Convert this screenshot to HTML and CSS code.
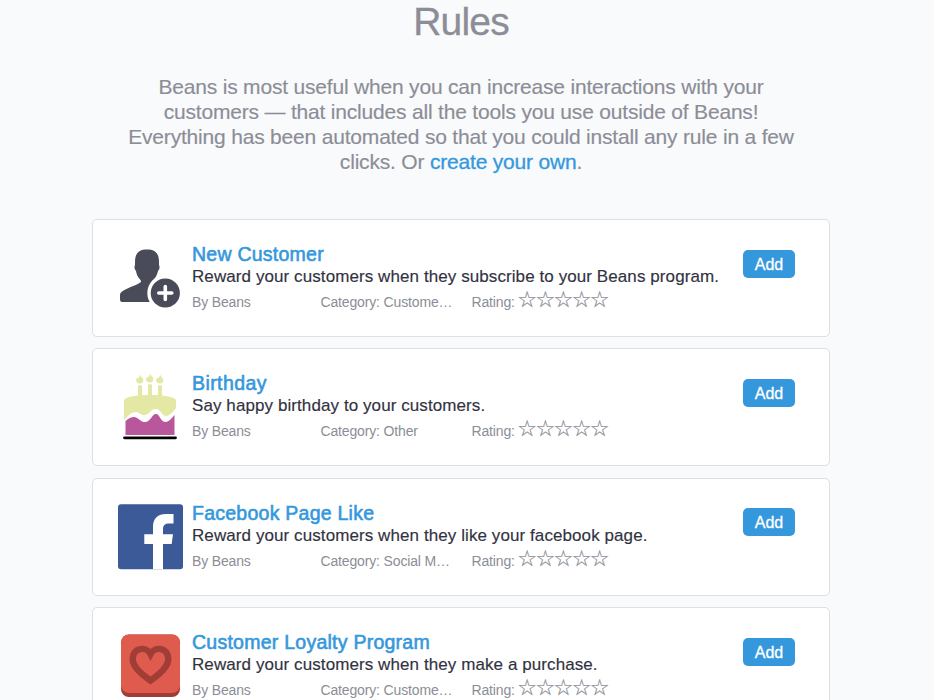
FILE: index.html
```html
<!DOCTYPE html>
<html lang="en">
<head>
<meta charset="utf-8">
<title>Rules</title>
<link rel="stylesheet" href="styles.css">
</head>
<body>
<main class="page">
  <h1 class="heading">Rules</h1>
  <p class="intro">Beans is most useful when you can increase interactions with your<br>customers — that includes all the tools you use outside of Beans!<br>Everything has been automated so that you could install any rule in a few<br>clicks. Or <a href="#">create your own</a>.</p>
  <section class="rules">
    <article class="card">
      <svg class="icon" viewBox="0 0 66 66" fill="#494b58">
        <path d="M17 17C17 8 21 4.500 29 4.500S41 8 41 17V20Q42.500 23 40 26C38 34 35 34 35 36.500Q35 39 43 43L44 57H4Q2 57 2 54V50C2 44 22 40 23 36.500C23 34 19 33 18 26Q15.500 23 17 20Z"/>
        <circle cx="47.300" cy="48" r="18" fill="#fff"/><circle cx="47.300" cy="48" r="14.600"/>
        <path d="M47.300 41.500V54.500M40.800 48H53.800" stroke="#fff" stroke-width="3.600" stroke-linecap="round"/>
      </svg>
      <div class="body">
        <h2 class="title">New Customer</h2>
        <p class="desc">Reward your customers when they subscribe to your Beans program.</p>
        <div class="meta"><span>By Beans</span><span>Category: Custome…</span><span class="rating">Rating: <span class="stars">☆☆☆☆☆</span></span></div>
      </div>
      <button class="add">Add</button>
    </article>
    <article class="card">
      <svg class="icon" viewBox="0 0 66 66">
        <path fill="#e3e9a4" d="M6 26Q8 22.500 20 21.500V12Q22 10 24 12V21H30V11Q32 9 34 11V21H40V12Q42 10 44 12V21.500Q56 22.500 58 26V34Q52 42 48 42Q45 42 42 37Q37 32 32 38C28 42 25 42 21 39Q16 36 11 41L6 46ZM22 0.500Q22.800 2.500 25 4.500Q26 9.500 22 9.500Q17 9.500 18.500 4.500Q22 4 22 .5ZM32 -.5Q32.800 1.500 35 3.500Q36 8.500 32 8.500Q27 8.500 28.500 3.500Q32 3 32 -.5ZM42 0.500Q42.800 2.500 45 4.500Q46 9.500 42 9.500Q37 9.500 38.500 4.500Q42 4 42 .5Z"/>
        <path fill="#b9579d" d="M7.500 47Q12 43 16 43C20 43 23 49 28 48C33 47 34 40 38 40C42 40 42 48 48 48Q51 48 56.500 41V61H7.500Z"/>
        <path stroke="#000" stroke-width="2.800" stroke-linecap="round" d="M6.500 63.800H57.500"/>
      </svg>
      <div class="body">
        <h2 class="title short">Birthday</h2>
        <p class="desc">Say happy birthday to your customers.</p>
        <div class="meta"><span>By Beans</span><span>Category: Other</span><span class="rating">Rating: <span class="stars">☆☆☆☆☆</span></span></div>
      </div>
      <button class="add">Add</button>
    </article>
    <article class="card">
      <svg class="icon" viewBox="0 0 66 66">
        <rect y="0.300" width="65" height="65" rx="3" fill="#3c5998"/>
        <path fill="#fff" d="M35 65.300V40H26.300V30.300H35V23C35 14 40 10 48 10H55.500V19.500H50.500Q45 19.500 45 25V30.300H55L53.700 40H45V65.300Z"/>
      </svg>
      <div class="body">
        <h2 class="title">Facebook Page Like</h2>
        <p class="desc">Reward your customers when they like your facebook page.</p>
        <div class="meta"><span>By Beans</span><span>Category: Social M…</span><span class="rating">Rating: <span class="stars">☆☆☆☆☆</span></span></div>
      </div>
      <button class="add">Add</button>
    </article>
    <article class="card">
      <svg class="icon" viewBox="0 0 66 66">
        <rect x="3" y="1.500" width="59" height="62.500" rx="8" fill="#a23c36"/>
        <rect x="3" y="1.500" width="59" height="58.500" rx="8" fill="#df5b4e"/>
        <path fill="none" stroke="#a03d37" stroke-width="6.500" d="M32.500 47.500C23 41 14.700 34 14.700 26C14.700 15 28 12.500 32.500 21C37 12.500 50.300 15 50.300 26C50.300 34 42 41 32.500 47.500Z"/>
      </svg>
      <div class="body">
        <h2 class="title">Customer Loyalty Program</h2>
        <p class="desc">Reward your customers when they make a purchase.</p>
        <div class="meta"><span>By Beans</span><span>Category: Custome…</span><span class="rating">Rating: <span class="stars">☆☆☆☆☆</span></span></div>
      </div>
      <button class="add">Add</button>
    </article>
  </section>
</main>
</body>
</html>
```
FILE: styles.css
```css
* { box-sizing: border-box; }
html { overflow: hidden; }
body { margin: 0; height: 700px; overflow: hidden; background: #f8fafc; font-family: "Liberation Sans", Arial, sans-serif; color: #32323f; }
.page { width: 738px; margin-left: 92px; }
h1, h2, p { margin: 0; font-weight: 400; }
.heading { height: 74px; line-height: 43px; font-size: 39px; letter-spacing: -.8px; color: #8c8d96; text-align: center; -webkit-text-stroke: .3px #8c8d96; }
.intro { height: 145px; line-height: 25px; font-size: 21px; letter-spacing: -.19px; color: #8c8d96; text-align: center; white-space: nowrap; -webkit-text-stroke: .15px #8c8d96; }
.intro a { color: #3598dc; text-decoration: none; -webkit-text-stroke: .3px #3598dc; }
.rules { display: grid; gap: 11.400px; }
.card { display: flex; height: 118px; padding: 25px 34px 0 25px; background: #fff; border: 1px solid #dddfe1; border-radius: 5px; }
.icon { width: 66px; height: 66px; flex: none; }
.body { width: 551px; margin-left: 8px; flex: none; white-space: nowrap; }
.title { height: 20px; line-height: 18px; font-size: 19.500px; letter-spacing: .25px; color: #3598dc; -webkit-text-stroke: .6px #3598dc; }
.title.short { letter-spacing: .42px; }
.desc { height: 24px; line-height: 24px; font-size: 17px; letter-spacing: .085px; -webkit-text-stroke: .15px #32323f; }
.meta { display: grid; grid-template-columns: 128.500px 151px auto; height: 26px; line-height: 27px; font-size: 14px; letter-spacing: -.15px; color: #8c8d96; }
.rating { display: flex; gap: 2.500px; }
.stars { font-family: "DejaVu Sans", sans-serif; font-size: 22px; line-height: 22px; letter-spacing: -1.600px; -webkit-text-stroke: .25px #8c8d96; }
.add { width: 52px; height: 28px; margin-top: 4.600px; padding: 0; border: 0; border-radius: 5px; background: #3598dc; color: #fff; font: 16px/29px "Liberation Sans", Arial, sans-serif; -webkit-text-stroke: .3px #fff; }
```
